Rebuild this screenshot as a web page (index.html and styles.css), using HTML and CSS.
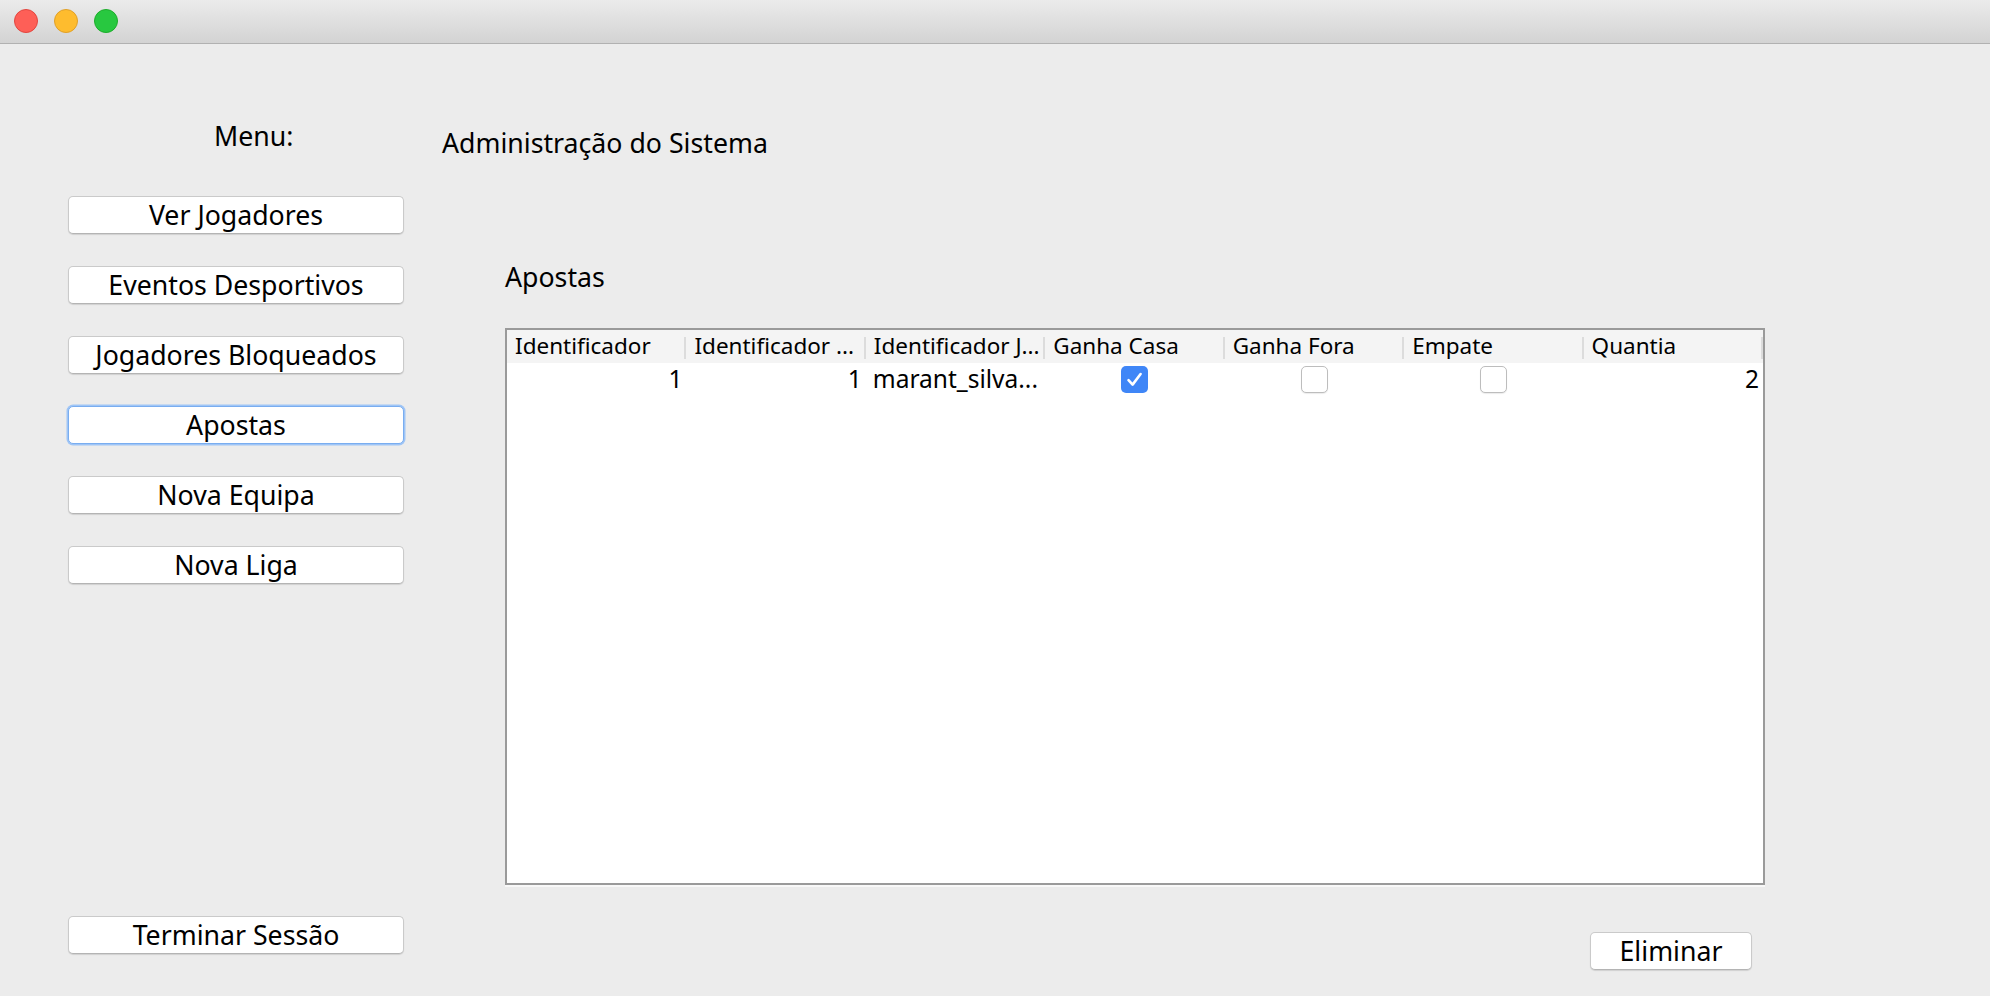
FILE: index.html
```html
<!DOCTYPE html>
<html lang="pt">
<head>
<meta charset="utf-8">
<title>Administração do Sistema</title>
<link rel="stylesheet" href="styles.css">
</head>
<body>
<div class="window">
  <div class="titlebar">
    <span class="light red"></span>
    <span class="light yellow"></span>
    <span class="light green"></span>
  </div>
  <div class="main">
    <aside class="sidebar">
      <div class="menu-label">Menu:</div>
      <div class="menu-buttons">
        <button class="btn">Ver Jogadores</button>
        <button class="btn">Eventos Desportivos</button>
        <button class="btn">Jogadores Bloqueados</button>
        <button class="btn focused">Apostas</button>
        <button class="btn">Nova Equipa</button>
        <button class="btn">Nova Liga</button>
      </div>
      <button class="btn logout">Terminar Sessão</button>
    </aside>
    <section class="content">
      <h1 class="title">Administração do Sistema</h1>
      <div class="panel">
        <h2 class="panel-title">Apostas</h2>
        <div class="table">
          <div class="thead">
            <div class="th">Identificador</div>
            <div class="th">Identificador ...</div>
            <div class="th">Identificador J...</div>
            <div class="th">Ganha Casa</div>
            <div class="th">Ganha Fora</div>
            <div class="th">Empate</div>
            <div class="th last">Quantia</div>
          </div>
          <div class="tr">
            <div class="td num">1</div>
            <div class="td num">1</div>
            <div class="td">marant_silva...</div>
            <div class="td center"><span class="check checked"><svg viewBox="0 0 27 27" width="27" height="27"><path d="M7.5 14.2 L11.6 18.6 L19.6 8" fill="none" stroke="#fff" stroke-width="2.6" stroke-linecap="round" stroke-linejoin="round"/></svg></span></div>
            <div class="td center"><span class="check"></span></div>
            <div class="td center"><span class="check"></span></div>
            <div class="td num">2</div>
          </div>
        </div>
        <div class="actions">
          <button class="btn small">Eliminar</button>
        </div>
      </div>
    </section>
  </div>
</div>
</body>
</html>
```

FILE: styles.css
```css
* { box-sizing: border-box; }

html, body {
  margin: 0;
  padding: 0;
}

body {
  background: #ececec;
  font-family: "Noto Sans", "DejaVu Sans", sans-serif;
  color: #000;
}

.window {
  width: 1990px;
  height: 996px;
  display: flex;
  flex-direction: column;
  overflow: hidden;
}

.titlebar {
  height: 44px;
  flex: none;
  background: linear-gradient(#ebebeb, #d3d3d3);
  border-bottom: 1px solid #b1b1b1;
  display: flex;
  align-items: center;
  gap: 16px;
  padding-left: 14px;
  padding-bottom: 1px;
}

.light {
  width: 24px;
  height: 24px;
  border-radius: 50%;
  display: block;
}
.red { background: #fe5f57; border: 1px solid #e2463f; }
.yellow { background: #febc2e; border: 1px solid #e0a028; }
.green { background: #28c840; border: 1px solid #1dad2b; }

.main {
  flex: 1;
  display: flex;
}

.sidebar {
  width: 404px;
  flex: none;
  padding-left: 68px;
  padding-bottom: 42px;
  display: flex;
  flex-direction: column;
}

.menu-label {
  font-size: 26.7px;
  line-height: 30px;
  margin-top: 77px;
  margin-left: 146px;
}

.menu-buttons {
  margin-top: 45px;
  display: flex;
  flex-direction: column;
  gap: 32px;
}

.btn {
  width: 336px;
  height: 38px;
  padding: 0;
  background: #fff;
  border: 1px solid #cacaca;
  border-bottom-color: #b4b4b4;
  border-radius: 5px;
  box-shadow: 0 1px 1px rgba(0, 0, 0, 0.12);
  font-family: "Noto Sans", "DejaVu Sans", sans-serif;
  font-size: 26.7px;
  line-height: 36px;
  color: #000;
  text-align: center;
}

.btn.focused {
  border-color: #79adf0;
  box-shadow: 0 0 0 1.5px #9fc5f6;
}

.btn.logout {
  margin-top: auto;
}

.btn.small {
  width: 162px;
}

.content {
  flex: 1;
  padding-left: 38px;
  display: flex;
  flex-direction: column;
}

.title {
  margin: 84px 0 0 0;
  font-weight: normal;
  font-size: 26.7px;
  line-height: 30px;
}

.panel {
  margin-left: 63px;
  width: 1260px;
  display: flex;
  flex-direction: column;
}

.panel-title {
  margin: 104px 0 0 0;
  font-weight: normal;
  font-size: 26.7px;
  line-height: 30px;
}

.table {
  margin-top: 36px;
  height: 557px;
  background: #fff;
  border: 2px solid #9a9a9a;
  box-shadow: 0 2px 0 #f8f8f8;
}

.thead, .tr {
  display: grid;
  grid-template-columns: repeat(7, 1fr);
}

.thead {
  height: 33px;
  background: #f4f4f4;
}

.th {
  position: relative;
  font-size: 22.5px;
  line-height: 32px;
  padding-left: 8px;
  white-space: nowrap;
  overflow: hidden;
}

.th::after {
  content: "";
  position: absolute;
  right: 0;
  top: 7px;
  bottom: 4px;
  width: 2px;
  background: #dcdcdc;
}

.tr {
  height: 32px;
}

.td {
  font-size: 24.5px;
  line-height: 30px;
  padding: 1px 7px 0 7px;
  white-space: nowrap;
  overflow: hidden;
}

.td.num {
  text-align: right;
  padding-right: 4px;
}

.td.center {
  display: flex;
  justify-content: center;
  align-items: center;
  padding: 0;
}

.check {
  width: 27px;
  height: 27px;
  border-radius: 5px;
  background: #fff;
  border: 1px solid #bdbdbd;
  box-shadow: 0 1px 1px rgba(0, 0, 0, 0.08);
  display: block;
}

.check.checked {
  background: #3f86f7;
  border: none;
  box-shadow: none;
}

.check svg {
  display: block;
}

.actions {
  margin-top: 47px;
  display: flex;
  justify-content: flex-end;
  padding-right: 13px;
}
```
